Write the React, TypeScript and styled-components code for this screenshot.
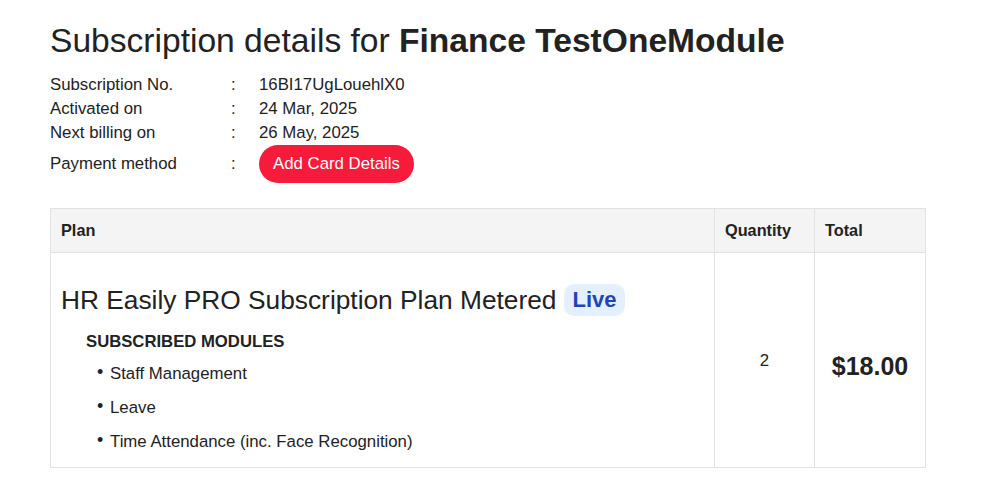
import React from 'react';
import styled, { createGlobalStyle } from 'styled-components';

const GlobalStyle = createGlobalStyle`
    body {
        margin: 0;
        background: #fff;
        font-family: "Liberation Sans", Arial, sans-serif;
        color: #222;
    }
`;

const Page = styled.div`
    padding: 20px 56px 20px 50px;
`;

const Title = styled.h1`
    margin: 0 0 11px;
    font-size: 33.6px;
    font-weight: 400;
    line-height: 42px;
    b {
        font-weight: 700;
    }
`;

const InfoGrid = styled.div`
    display: grid;
    grid-template-columns: 180px 29px auto;
    align-items: center;
    justify-items: start;
    font-size: 16.8px;
    line-height: 24px;
`;

const Colon = styled.span`
    padding-left: 1px;
`;

const AddCardButton = styled.button`
    height: 38px;
    padding: 0 14px;
    border: none;
    border-radius: 19px;
    background: #f61b3a;
    color: #fff;
    font-family: inherit;
    font-size: 16.8px;
    cursor: pointer;
`;

const Table = styled.table`
    margin-top: 25px;
    width: 876px;
    border-collapse: collapse;
    table-layout: fixed;
    font-size: 16.8px;
`;

const Th = styled.th<{ $width?: number }>`
    box-sizing: border-box;
    width: ${(p) => (p.$width ? `${p.$width}px` : 'auto')};
    height: 44px;
    padding: 0 10px;
    background: #f4f4f4;
    border: 1px solid #e2e2e2;
    text-align: left;
    font-size: 16.3px;
    font-weight: 700;
`;

const Td = styled.td<{ $align?: string }>`
    padding: 0 10px;
    border: 1px solid #e2e2e2;
    text-align: ${(p) => p.$align || 'left'};
    vertical-align: middle;
`;

const PlanCell = styled(Td)`
    padding: 31px 10px 15px;
`;

const PlanName = styled.div`
    display: flex;
    align-items: center;
    gap: 8px;
    font-size: 26.3px;
    line-height: 32px;
`;

const Badge = styled.span`
    display: inline-flex;
    align-items: center;
    height: 32px;
    padding: 0 8px;
    border-radius: 10px;
    background: #e4f0fd;
    color: #1f45b4;
    font-size: 22px;
    font-weight: 700;
`;

const ModulesHeading = styled.div`
    margin: 16px 0 0 25px;
    font-size: 16.7px;
    font-weight: 700;
    line-height: 20px;
`;

const ModuleList = styled.ul`
    list-style: none;
    margin: 0;
    padding: 0 0 0 36px;
`;

const ModuleItem = styled.li`
    position: relative;
    margin-top: 14px;
    padding-left: 13px;
    font-size: 16.8px;
    line-height: 20px;
    &:first-child {
        margin-top: 12px;
    }
    &::before {
        content: '•';
        position: absolute;
        left: 0;
        top: -2px;
        font-size: 18px;
    }
`;

const Quantity = styled(Td)`
    padding-top: 2px;
`;

const Total = styled(Td)`
    padding-top: 12px;
    font-size: 25px;
    font-weight: 700;
`;

const modules = ['Staff Management', 'Leave', 'Time Attendance (inc. Face Recognition)'];

const details: [string, string][] = [
    ['Subscription No.', '16BI17UgLouehlX0'],
    ['Activated on', '24 Mar, 2025'],
    ['Next billing on', '26 May, 2025'],
];

const App: React.FC = () => {
    return <Page>
        <GlobalStyle />
        <Title>Subscription details for <b>Finance TestOneModule</b></Title>
        <InfoGrid>
            {details.map(([label, value]) => (
                <React.Fragment key={label}>
                    <span>{label}</span>
                    <Colon>:</Colon>
                    <span>{value}</span>
                </React.Fragment>
            ))}
            <span>Payment method</span>
            <Colon>:</Colon>
            <AddCardButton>Add Card Details</AddCardButton>
        </InfoGrid>
        <Table>
            <thead>
                <tr>
                    <Th>Plan</Th>
                    <Th $width={100}>Quantity</Th>
                    <Th $width={111}>Total</Th>
                </tr>
            </thead>
            <tbody>
                <tr>
                    <PlanCell>
                        <PlanName>
                            HR Easily PRO Subscription Plan Metered
                            <Badge>Live</Badge>
                        </PlanName>
                        <ModulesHeading>SUBSCRIBED MODULES</ModulesHeading>
                        <ModuleList>
                            {modules.map((m) => <ModuleItem key={m}>{m}</ModuleItem>)}
                        </ModuleList>
                    </PlanCell>
                    <Quantity $align="center">2</Quantity>
                    <Total $align="center">$18.00</Total>
                </tr>
            </tbody>
        </Table>
    </Page>
}

export default App;
